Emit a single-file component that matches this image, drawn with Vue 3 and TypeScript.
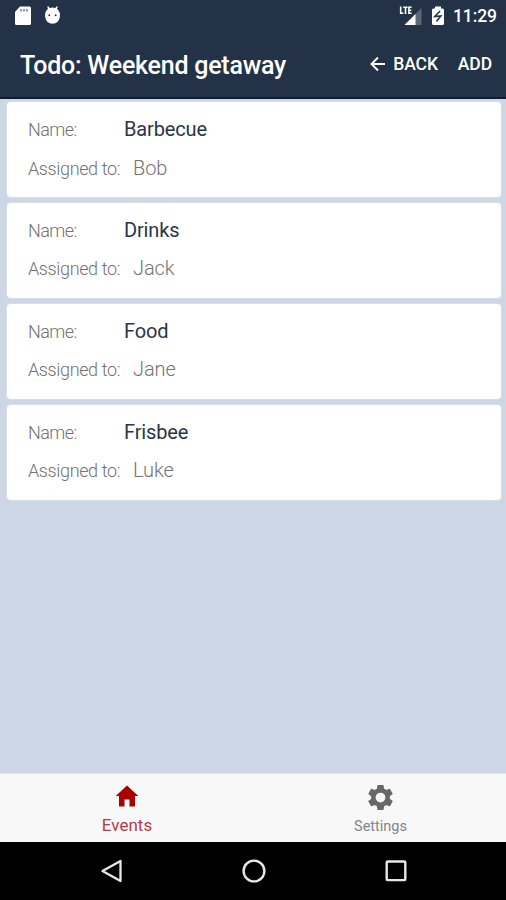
<script setup lang="ts">
interface TodoItem {
  name: string
  assignee: string
}

const items: TodoItem[] = [
  { name: 'Barbecue', assignee: 'Bob' },
  { name: 'Drinks', assignee: 'Jack' },
  { name: 'Food', assignee: 'Jane' },
  { name: 'Frisbee', assignee: 'Luke' },
]
</script>

<template>
  <div class="screen">
    <header class="header">
      <div class="status">
        <svg class="sd" viewBox="0 0 18 20">
          <path d="M6 .5h9.500A1.500 1.500 0 0 1 17 2v15.500a1.500 1.500 0 0 1-1.500 1.500h-13A1.500 1.500 0 0 1 1 17.500V6z" fill="#fff" />
          <path d="M7 3v2.500M10 3v2.500M13 3v2.500" stroke="#7c838d" stroke-width="1.600" />
        </svg>
        <svg class="droid" viewBox="0 0 18 20">
          <path d="M1.200 7.500Q2 4.500 4.200 3L3.400 .8l1.200-.6L6 2a9 9 0 0 1 6 0L13.400.2l1.200.6L13.800 3Q16 4.500 16.800 7.500v3.500a7.800 7.800 0 0 1-15.600 0z" fill="#fff" />
          <circle cx="5.600" cy="9.800" r="1" fill="#243247" />
          <circle cx="12.400" cy="9.800" r="1" fill="#243247" />
        </svg>
        <span class="spacer"></span>
        <svg class="signal" viewBox="0 0 24 20">
          <path d="M22.500 2v17H5.500z" fill="#5d6876" />
          <path d="M16.500 8v11H5.500z" fill="#fff" />
          <path d="M1.700 .5v6.700h2.700M4.200 1.300h4.400M6.500 1.300V8M12.600 1.300H9.900v6h2.700M9.900 4.300h2.400" fill="none" stroke="#fff" stroke-width="1.600" />
        </svg>
        <svg class="battery" viewBox="0 0 14 20">
          <path d="M4 .5h6v2h1.500A1.500 1.500 0 0 1 13 4v13.500a1.500 1.500 0 0 1-1.500 1.500h-9A1.500 1.500 0 0 1 1 17.500V4A1.500 1.500 0 0 1 2.500 2.500H4z" fill="#fff" />
          <path d="M9 5 3.800 10.500 9.800 10 5.500 15.500" fill="none" stroke="#243247" stroke-width="1.600" />
        </svg>
        <span class="clock">11:29</span>
      </div>
      <div class="toolbar">
        <h1 class="title">Todo: Weekend getaway</h1>
        <button class="action back">
          <svg class="arrow" viewBox="0 0 16 16">
            <path d="M15 8H2M8 1.500 1.500 8 8 14.500" fill="none" stroke="#fff" stroke-width="1.900" />
          </svg>
          <span>BACK</span>
        </button>
        <button class="action add">ADD</button>
      </div>
    </header>

    <main class="list">
      <article v-for="item in items" :key="item.name" class="card">
        <div class="row">
          <span class="label name-label">Name:</span>
          <span class="value name">{{ item.name }}</span>
        </div>
        <div class="row">
          <span class="label assigned-label">Assigned to:</span>
          <span class="value">{{ item.assignee }}</span>
        </div>
      </article>
    </main>

    <nav class="tabs">
      <button class="tab active">
        <svg class="home" viewBox="0 0 24 22">
          <path d="M12 .5 23.300 11H20v10.500h-5.500v-7h-5v7H4V11H.7z" fill="#a90000" />
        </svg>
        <span>Events</span>
      </button>
      <button class="tab settings">
        <svg class="gear" viewBox="2 2 20 20">
          <path d="M19.430 12.980c.04-.32.07-.64.07-.98s-.03-.66-.07-.98l2.110-1.650a.5.5 0 0 0 .12-.64l-2-3.460a.5.5 0 0 0-.61-.22l-2.490 1a7.300 7.300 0 0 0-1.690-.98l-.38-2.650A.49.490 0 0 0 14 2h-4a.49.490 0 0 0-.49.420l-.38 2.650c-.61.250-1.170.590-1.690.980l-2.490-1a.49.490 0 0 0-.61.220l-2 3.460a.5.5 0 0 0 .12.640l2.110 1.650c-.04.320-.07.650-.07.980s.03.660.07.980l-2.110 1.650a.5.5 0 0 0-.12.640l2 3.460c.12.220.390.300.610.220l2.490-1c.52.400 1.080.730 1.690.980l.38 2.650c.03.240.240.420.490.420h4c.25 0 .46-.18.490-.42l.38-2.650c.61-.25 1.170-.59 1.690-.98l2.490 1c.23.090.490 0 .61-.22l2-3.460a.5.5 0 0 0-.12-.64zM12 15.900a3.900 3.900 0 1 1 0-7.800 3.900 3.900 0 0 1 0 7.800z" fill="#686868" />
        </svg>
        <span>Settings</span>
      </button>
    </nav>

    <footer class="system">
      <svg viewBox="0 0 24 24"><path d="M20.500 2v20L2.500 12z" fill="none" stroke="#e8e8e8" stroke-width="2.300" stroke-linejoin="round" /></svg>
      <svg viewBox="0 0 24 24"><circle cx="12" cy="12" r="10.400" fill="none" stroke="#e8e8e8" stroke-width="2.400" /></svg>
      <svg viewBox="0 0 24 24"><rect x="2.700" y="2.500" width="18.600" height="18.600" rx="1" fill="none" stroke="#e8e8e8" stroke-width="2.400" /></svg>
    </footer>
  </div>
</template>

<style>
body {
  margin: 0;
}
</style>

<style scoped>
.screen {
  display: flex;
  flex-direction: column;
  width: 506px;
  height: 900px;
  overflow: hidden;
  background: #cdd6e5;
  font-family: Roboto, "Liberation Sans", sans-serif;
}
svg {
  display: block;
  flex: none;
}
button {
  margin: 0;
  padding: 0;
  border: 0;
  background: none;
  font: inherit;
  color: inherit;
}
.header {
  box-sizing: border-box;
  flex: none;
  height: 99px;
  background: #243247;
  border-bottom: 2px solid #111b33;
  color: #fff;
}
.status {
  display: flex;
  align-items: center;
  height: 31px;
  padding: 0 9px 0 14px;
}
.sd {
  width: 18px;
  height: 20px;
}
.droid {
  width: 17px;
  height: 19px;
  margin-left: 12px;
}
.spacer {
  flex: 1;
}
.signal {
  width: 24px;
  height: 20px;
}
.battery {
  width: 14px;
  height: 20px;
  margin-left: 8px;
}
.clock {
  width: 44px;
  margin-left: 8px;
  padding-top: 2px;
  font-size: 17.500px;
  font-weight: 500;
  line-height: 29px;
  letter-spacing: -0.1px;
  white-space: nowrap;
}
.toolbar {
  display: flex;
  align-items: center;
  height: 66px;
  padding: 0 14px 0 20px;
}
.title {
  flex: 1;
  margin: 0;
  padding-top: 3px;
  font-size: 25px;
  font-weight: 500;
  line-height: 30px;
  letter-spacing: -0.240px;
  white-space: nowrap;
}
.action {
  font-size: 17.500px;
  font-weight: 500;
  line-height: 22px;
  letter-spacing: -0.1px;
}
.back {
  display: flex;
  align-items: center;
}
.arrow {
  width: 16px;
  height: 16px;
  margin-right: 7px;
}
.add {
  margin-left: 20px;
}
.list {
  flex: 1;
  display: flex;
  flex-direction: column;
  gap: 5.900px;
  padding: 3px 5px 0 7px;
}
.card {
  box-sizing: border-box;
  height: 95px;
  padding: 8px 21px 0;
  border-radius: 4px;
  background: #fff;
  box-shadow: 0 0 1px 1px #d7dfeb;
}
.row {
  display: flex;
  align-items: baseline;
  height: 38.500px;
  line-height: 38.500px;
  white-space: nowrap;
}
.label {
  color: #727272;
  font-size: 18px;
  font-weight: 300;
  letter-spacing: -0.380px;
}
.name-label {
  width: 96px;
  letter-spacing: -0.550px;
}
.assigned-label {
  width: 105px;
}
.value {
  color: #747474;
  font-size: 20px;
  font-weight: 300;
  letter-spacing: -0.1px;
}
.name {
  color: #2b344a;
  font-weight: 400;
  letter-spacing: -0.150px;
}
.tabs {
  box-sizing: border-box;
  display: flex;
  flex: none;
  height: 69px;
  background: #f8f8f8;
  border-top: 1px solid #e1e4e9;
}
.tab {
  box-sizing: border-box;
  display: flex;
  flex: 0 0 253px;
  flex-direction: column;
  align-items: center;
  padding-top: 11px;
  color: #858585;
  font-size: 14.500px;
  line-height: 18px;
}
.tab.active {
  padding-left: 1px;
  color: #b93a42;
  font-size: 17px;
}
.tab.settings {
  padding-left: 2px;
}
.home {
  width: 24px;
  height: 22px;
  margin-bottom: 9px;
}
.gear {
  width: 25px;
  height: 25px;
  margin-bottom: 8px;
}
.system {
  box-sizing: border-box;
  display: flex;
  flex: none;
  justify-content: center;
  gap: 118px;
  height: 58px;
  padding-top: 17px;
  padding-left: 2px;
  background: #000;
}
.system svg {
  width: 24px;
  height: 24px;
}
</style>
